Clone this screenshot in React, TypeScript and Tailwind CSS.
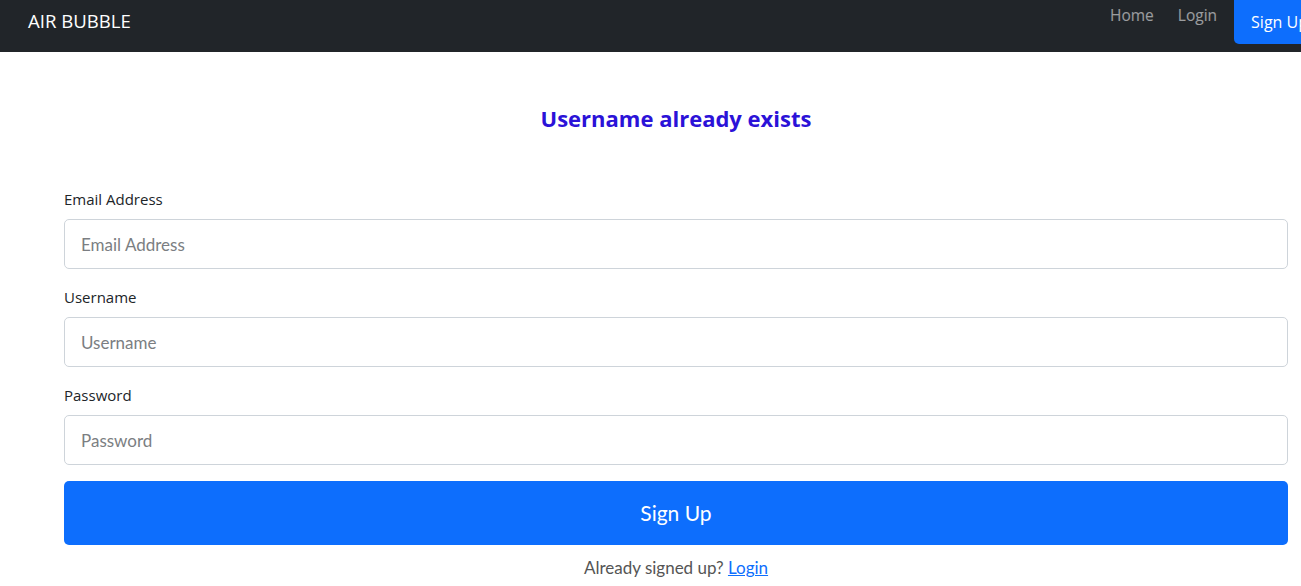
import React from "react";

const fields = [
  { label: "Email Address", type: "email" },
  { label: "Username", type: "text" },
  { label: "Password", type: "password" },
];

export default function App() {
  return (
    <div className="min-h-[586px] bg-white font-['Open_Sans',sans-serif] overflow-hidden">
      <nav className="h-[52px] bg-[#212529] flex items-start justify-between overflow-hidden">
        <a className="ml-[28px] mt-[8px] text-[18.6px] leading-[26px] text-white">AIR BUBBLE</a>
        <div className="flex items-start mr-[-24px]">
          <a className="mt-[4px] text-[15.5px] leading-[22px] text-white/55">Home</a>
          <a className="ml-[24px] mt-[4px] text-[15.5px] leading-[22px] text-white/55">Login</a>
          <a className="ml-[17px] h-[44px] pl-[17px] pr-[17px] bg-[#0d6efd] rounded-bl-[5px] text-white text-[16px] leading-[44px] whitespace-nowrap">
            Sign Up
          </a>
        </div>
      </nav>

      <div className="ml-[64px] w-[1224px]">
        <h2 className="mt-[51px] text-center text-[22px] leading-[30px] font-bold text-[#2b12d8]">
          Username already exists
        </h2>

        <form className="mt-[56px]" onSubmit={(e) => e.preventDefault()}>
          {fields.map((f) => (
            <div key={f.label} className="mb-[18px]">
              <label className="block text-[15px] leading-[21px] text-[#212529] mb-[9px]">
                {f.label}
              </label>
              <input
                type={f.type}
                placeholder={f.label}
                className="block w-full h-[50px] px-[16px] border border-[#ced4da] rounded-[5px] font-['Lato',sans-serif] text-[17px] text-[#212529] placeholder:text-[#7b7e82] outline-none"
              />
            </div>
          ))}
          <button
            type="submit"
            className="mt-[-2px] w-full h-[64px] bg-[#0d6efd] rounded-[5px] text-white text-[21px] font-['Lato',sans-serif]"
          >
            Sign Up
          </button>
        </form>

        <p className="mt-[11px] text-center text-[17px] leading-[24px] text-[#555] font-['Lato',sans-serif]">
          Already signed up?{" "}
          <a href="#" className="text-[#0d6efd] underline">
            Login
          </a>
        </p>
      </div>
    </div>
  );
}
